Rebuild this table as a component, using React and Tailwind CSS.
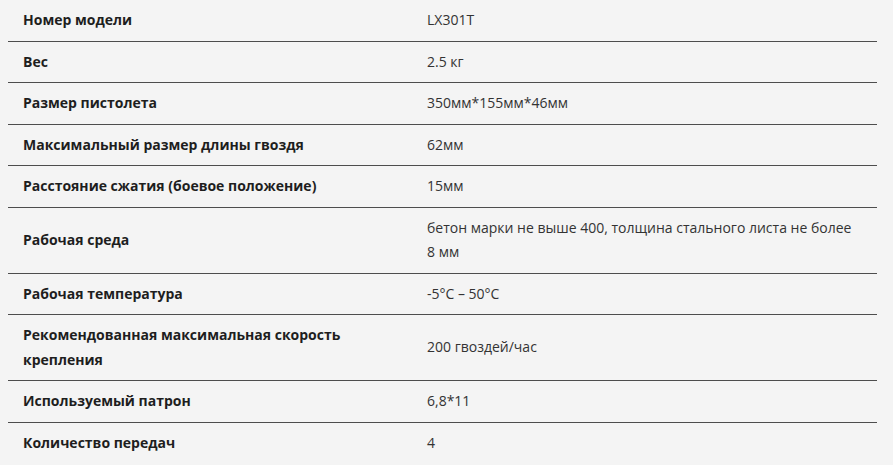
import React from 'react';

const specs = [
  ['Номер модели', 'LX301T'],
  ['Вес', '2.5 кг'],
  ['Размер пистолета', '350мм*155мм*46мм'],
  ['Максимальный размер длины гвоздя', '62мм'],
  ['Расстояние сжатия (боевое положение)', '15мм'],
  ['Рабочая среда', 'бетон марки не выше 400, толщина стального листа не более 8 мм'],
  ['Рабочая температура', '-5°C – 50°C'],
  ['Рекомендованная максимальная скорость крепления', '200 гвоздей/час'],
  ['Используемый патрон', '6,8*11'],
  ['Количество передач', '4'],
];

export default function App() {
  return (
    <div
      className="w-[893px] h-[465px] overflow-hidden bg-[#f4f4f4] pl-[8px] pr-[16px]"
      style={{ fontFamily: '"Open Sans", "Liberation Sans", sans-serif' }}
    >
      <table className="w-full border-collapse text-[14px] leading-[24.5px]">
        <tbody>
          {specs.map(([label, value], idx) => (
            <tr key={idx} className="border-b border-[#4d4d4d] last:border-0">
              <td className="w-[404px] py-[8px] pl-[15px] pr-[15px] align-middle font-bold text-[#1e1e1e]">
                {label}
              </td>
              <td className="py-[8px] pl-[15px] pr-[15px] align-middle text-[#333]">{value}</td>
            </tr>
          ))}
        </tbody>
      </table>
    </div>
  );
}
